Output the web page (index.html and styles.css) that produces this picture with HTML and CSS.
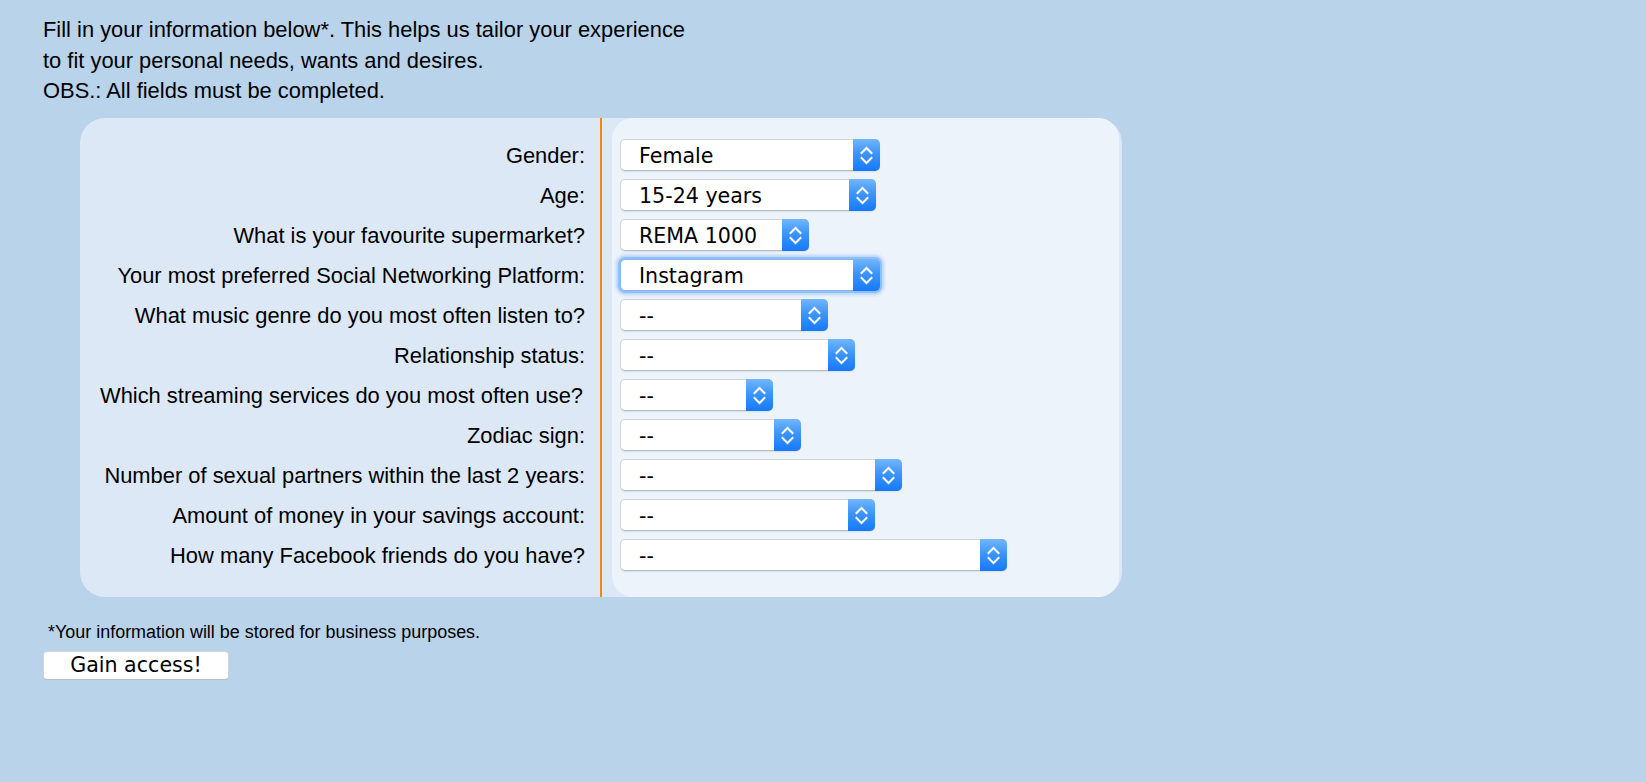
FILE: index.html
```html
<!DOCTYPE html>
<html lang="en">
<head>
<meta charset="utf-8">
<title>Fill in your information</title>
<link rel="stylesheet" href="styles.css">
</head>
<body>
<div class="page">
  <p class="intro">Fill in your information below*. This helps us tailor your experience<br>to fit your personal needs, wants and desires.<br>OBS.: All fields must be completed.</p>

  <form class="panel">
    <div class="labels">
      <label>Gender:</label>
      <label>Age:</label>
      <label>What is your favourite supermarket?</label>
      <label>Your most preferred Social Networking Platform:</label>
      <label>What music genre do you most often listen to?</label>
      <label>Relationship status:</label>
      <label class="trail">Which streaming services do you most often use?</label>
      <label>Zodiac sign:</label>
      <label>Number of sexual partners within the last 2 years:</label>
      <label>Amount of money in your savings account:</label>
      <label>How many Facebook friends do you have?</label>
    </div>
    <div class="fields">
      <div class="sel w-gender"><select><option>Female</option></select><span class="arrows"><svg viewBox="0 0 27 32" width="27" height="32"><polyline points="8.5,14 13.5,9 18.5,14"/><polyline points="8.5,19 13.5,24 18.5,19"/></svg></span></div>
      <div class="sel w-age"><select><option>15-24 years</option></select><span class="arrows"><svg viewBox="0 0 27 32" width="27" height="32"><polyline points="8.5,14 13.5,9 18.5,14"/><polyline points="8.5,19 13.5,24 18.5,19"/></svg></span></div>
      <div class="sel w-market"><select><option>REMA 1000</option></select><span class="arrows"><svg viewBox="0 0 27 32" width="27" height="32"><polyline points="8.5,14 13.5,9 18.5,14"/><polyline points="8.5,19 13.5,24 18.5,19"/></svg></span></div>
      <div class="sel w-social focused"><select><option>Instagram</option></select><span class="arrows"><svg viewBox="0 0 27 32" width="27" height="32"><polyline points="8.5,14 13.5,9 18.5,14"/><polyline points="8.5,19 13.5,24 18.5,19"/></svg></span></div>
      <div class="sel w-music"><select><option>--</option></select><span class="arrows"><svg viewBox="0 0 27 32" width="27" height="32"><polyline points="8.5,14 13.5,9 18.5,14"/><polyline points="8.5,19 13.5,24 18.5,19"/></svg></span></div>
      <div class="sel w-relation"><select><option>--</option></select><span class="arrows"><svg viewBox="0 0 27 32" width="27" height="32"><polyline points="8.5,14 13.5,9 18.5,14"/><polyline points="8.5,19 13.5,24 18.5,19"/></svg></span></div>
      <div class="sel w-stream"><select><option>--</option></select><span class="arrows"><svg viewBox="0 0 27 32" width="27" height="32"><polyline points="8.5,14 13.5,9 18.5,14"/><polyline points="8.5,19 13.5,24 18.5,19"/></svg></span></div>
      <div class="sel w-zodiac"><select><option>--</option></select><span class="arrows"><svg viewBox="0 0 27 32" width="27" height="32"><polyline points="8.5,14 13.5,9 18.5,14"/><polyline points="8.5,19 13.5,24 18.5,19"/></svg></span></div>
      <div class="sel w-partners"><select><option>--</option></select><span class="arrows"><svg viewBox="0 0 27 32" width="27" height="32"><polyline points="8.5,14 13.5,9 18.5,14"/><polyline points="8.5,19 13.5,24 18.5,19"/></svg></span></div>
      <div class="sel w-money"><select><option>--</option></select><span class="arrows"><svg viewBox="0 0 27 32" width="27" height="32"><polyline points="8.5,14 13.5,9 18.5,14"/><polyline points="8.5,19 13.5,24 18.5,19"/></svg></span></div>
      <div class="sel w-friends"><select><option>--</option></select><span class="arrows"><svg viewBox="0 0 27 32" width="27" height="32"><polyline points="8.5,14 13.5,9 18.5,14"/><polyline points="8.5,19 13.5,24 18.5,19"/></svg></span></div>
    </div>
  </form>

  <p class="note">*Your information will be stored for business purposes.</p>
  <button class="access" type="button">Gain access!</button>
</div>
</body>
</html>
```

FILE: styles.css
```css
html, body {
  margin: 0;
  padding: 0;
  background: #b9d3eb;
  color: #000;
  font-family: "Liberation Sans", Arial, sans-serif;
}

.page {
  padding: 15px 0 0 43px;
}

.intro {
  margin: 0;
  font-size: 21.9px;
  line-height: 30.5px;
}

.panel {
  display: flex;
  width: 1042px;
  height: 479px;
  box-sizing: border-box;
  margin: 11.5px 0 0 37px;
  background: #dce8f6;
  border-radius: 25px;
}

.labels {
  width: 505px;
  flex: none;
  box-sizing: content-box;
  padding: 22px 15px 0 0;
  border-right: 2px solid #f08a0c;
  display: flex;
  flex-direction: column;
  align-items: flex-end;
  gap: 8px;
}

.labels label {
  height: 32px;
  line-height: 32px;
  font-size: 21.9px;
  white-space: nowrap;
}

.labels .trail {
  margin-right: 2px;
}

.fields {
  flex: 1;
  margin: 0 3px 0 10px;
  padding: 21px 0 0 8px;
  background: #ecf3fb;
  border-radius: 21px;
  display: flex;
  flex-direction: column;
  align-items: flex-start;
  gap: 8px;
}

.sel {
  position: relative;
  height: 32px;
  box-sizing: border-box;
  border-radius: 5px;
  background: #fff;
  border: 1px solid #d3d5d9;
  border-bottom-color: #b9bcc1;
  box-shadow: 0 1px 1px rgba(0, 0, 0, 0.08);
}

.sel.focused {
  box-shadow: 0 0 0 2px rgba(140, 188, 248, 0.9), 0 0 3px 4px rgba(140, 188, 248, 0.55);
  border-color: #8ab5ec;
}

.sel select {
  -webkit-appearance: none;
  appearance: none;
  width: 100%;
  height: 100%;
  margin: 0;
  border: 0;
  background: transparent;
  padding: 2px 30px 0 18px;
  font-family: "DejaVu Sans", Verdana, sans-serif;
  font-size: 20.6px;
  color: #000;
  outline: none;
}

.arrows {
  position: absolute;
  top: -1px;
  right: -1px;
  bottom: -1px;
  width: 27px;
  border-radius: 0 5px 5px 0;
  background: linear-gradient(to bottom, #72b6fb 0%, #3d95fb 45%, #1679fa 100%);
}

.arrows svg {
  display: block;
  width: 27px;
  height: 100%;
}

.arrows polyline {
  fill: none;
  stroke: #fff;
  stroke-width: 2;
  stroke-linecap: square;
  stroke-linejoin: miter;
}

.w-gender { width: 260px; }
.w-age { width: 256px; }
.w-market { width: 189px; }
.w-social { width: 260px; }
.w-music { width: 208px; }
.w-relation { width: 235px; }
.w-stream { width: 153px; }
.w-zodiac { width: 181px; }
.w-partners { width: 282px; }
.w-money { width: 255px; }
.w-friends { width: 387px; }

.note {
  margin: 24.5px 0 0 5px;
  font-size: 17.95px;
  line-height: 21px;
}

.access {
  display: block;
  margin-top: 8.5px;
  width: 186px;
  height: 29px;
  padding: 0;
  background: #fff;
  border: 1px solid #d0d2d6;
  border-bottom-color: #b8bbc0;
  border-radius: 4px;
  box-shadow: 0 1px 1px rgba(0, 0, 0, 0.08);
  font-family: "DejaVu Sans", Verdana, sans-serif;
  font-size: 20.6px;
  color: #000;
  line-height: 27px;
}
```
